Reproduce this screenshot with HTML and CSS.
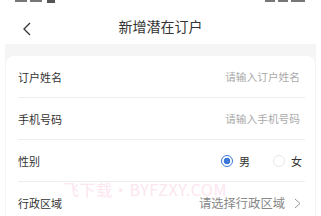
FILE: index.html
```html
<!DOCTYPE html>
<html lang="zh">
<head>
<meta charset="utf-8">
<link rel="stylesheet" href="styles.css">
</head>
<body>
<div class="page">
  <div class="status">
    <div class="st-left"><span class="st-a"></span><span class="st-b"></span><span class="st-box"></span></div>
    <div class="st-right"><span class="st-i1"></span><span class="st-i2"></span><span class="st-i3"></span></div>
  </div>
  <header class="header">
    <svg class="back" width="10" height="14" viewBox="0 0 10 14"><path d="M8 1 L2 7 L8 13" fill="none" stroke="#333" stroke-width="1.3"/></svg>
    <h1 class="title">新增潜在订户</h1>
  </header>
  <div class="band">
    <div class="card">
      <div class="row">
        <span class="label">订户姓名</span>
        <span class="ph">请输入订户姓名</span>
      </div>
      <div class="row">
        <span class="label">手机号码</span>
        <span class="ph">请输入手机号码</span>
      </div>
      <div class="row">
        <span class="label">性别</span>
        <div class="radios">
          <span class="opt"><span class="radio on"></span><span class="rtext">男</span></span>
          <span class="opt"><span class="radio off"></span><span class="rtext">女</span></span>
        </div>
      </div>
      <div class="row last">
        <span class="label">行政区域</span>
        <span class="select"><span class="stext">请选择行政区域</span><svg class="chev" width="7" height="11" viewBox="0 0 7 11"><path d="M1 1 L6 5.5 L1 10" fill="none" stroke="#999" stroke-width="1"/></svg></span>
      </div>
    </div>
  </div>
  <div class="watermark">飞下载・BYFZXY.COM</div>
</div>
</body>
</html>
```
FILE: styles.css
```css
* { box-sizing: border-box; margin: 0; padding: 0; }
html, body { background: #fff; }
body {
  width: 321px;
  height: 216px;
  overflow: hidden;
  font-family: "Noto Sans CJK SC", "Noto Sans", sans-serif;
  color: #333;
}
.page { position: relative; width: 321px; height: 216px; overflow: hidden; }
.status {
  height: 3px;
  overflow: hidden;
  display: flex;
  justify-content: space-between;
  padding: 0 16px 0 15px;
}
.st-left, .st-right { display: flex; align-items: flex-start; height: 3px; }
.st-left span, .st-right span { display: block; height: 2px; background: #777; margin-right: 3px; }
.st-right span:last-child { margin-right: 0; }
.st-a { width: 12px; }
.st-b { width: 12px; }
.st-box { width: 8px; height: 3px !important; background: #555 !important; margin-left: 2px; }
.st-i1 { width: 10px; }
.st-i2 { width: 10px; }
.st-i3 { width: 14px; }
.header {
  height: 41px;
  padding-top: 4px;
  display: flex;
  align-items: center;
  justify-content: center;
  position: relative;
}
.back { position: absolute; left: 22px; top: 19px; }
.title { font-size: 14px; font-weight: 400; color: #333; }
.band {
  margin: 0 5px;
  background: #f5f5f5;
  padding: 12px 1px 0;
  height: 172px;
}
.card {
  background: #fff;
  border-radius: 8px 8px 0 0;
  padding: 0 10px 0 12px;
  height: 100%;
}
.row {
  height: 42px;
  border-bottom: 1px solid #eeeeee;
  display: flex;
  align-items: center;
  justify-content: space-between;
}
.row.last { border-bottom: none; }
.label { font-size: 11px; color: #333; }
.ph { font-size: 10.7px; color: #aaa; margin-right: 5px; }
.radios {
  width: 81px;
  flex: none;
  display: flex;
  align-items: center;
  justify-content: space-between;
  margin-right: 3px;
}
.opt { display: flex; align-items: center; }
.radio {
  flex: none;
  width: 12px; height: 12px; border-radius: 50%;
  display: block;
  margin-right: 6px;
}
.radio.on { border: 1.2px solid #3c78d8; background: radial-gradient(circle, #3c78d8 0 3.2px, #fff 3.6px); }
.radio.off { border: 1px solid #e6e6e6; }
.rtext { font-size: 11px; line-height: 14px; color: #333; }
.select { font-size: 12.3px; color: #888; display: flex; align-items: center; margin-right: 4px; }
.chev { margin-left: 9px; flex: none; }
.watermark {
  position: absolute;
  left: 63px;
  top: 177px;
  font-size: 16px;
  letter-spacing: 0.6px;
  color: #fce6f0;
  pointer-events: none;
}
```
